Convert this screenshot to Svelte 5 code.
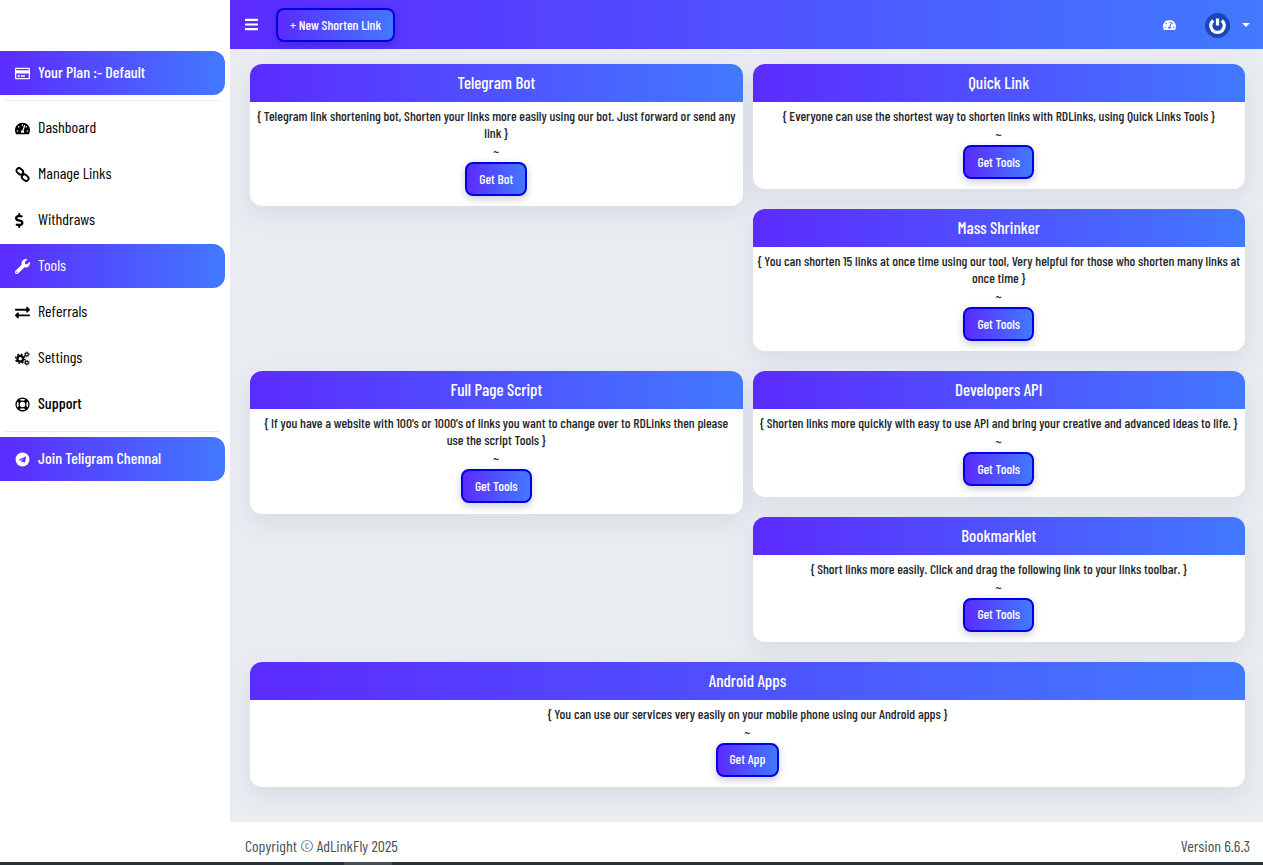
<script>
  const nav = [
    { label: 'Dashboard', icon: 'gauge' },
    { label: 'Manage Links', icon: 'link' },
    { label: 'Withdraws', icon: 'dollar' },
    { label: 'Tools', icon: 'wrench', active: true },
    { label: 'Referrals', icon: 'exchange' },
    { label: 'Settings', icon: 'cogs' },
    { label: 'Support', icon: 'ring', strong: true }
  ];
  const paths = {
    gauge: ['0 0 576 512', 'M288 32C128.94 32 0 160.94 0 320c0 52.8 14.25 102.26 39.06 144.8 5.61 9.62 16.3 15.2 27.44 15.2h443c11.14 0 21.83-5.58 27.44-15.2C561.75 422.26 576 372.8 576 320c0-159.06-128.94-288-288-288zm0 64c14.71 0 26.58 10.13 30.32 23.65-1.11 2.26-2.64 4.23-3.45 6.67l-9.22 27.67c-5.13 3.49-10.97 6.01-17.64 6.01-17.67 0-32-14.33-32-32S270.33 96 288 96zM96 384c-17.67 0-32-14.33-32-32s14.33-32 32-32 32 14.33 32 32-14.33 32-32 32zm48-160c-17.67 0-32-14.33-32-32s14.33-32 32-32 32 14.33 32 32-14.33 32-32 32zm246.77-72.41l-61.33 184C343.13 347.33 352 364.54 352 384c0 11.72-3.38 22.55-8.88 32H232.88c-5.5-9.45-8.88-20.28-8.88-32 0-33.94 26.5-61.43 59.9-63.59l61.34-184.01c4.17-12.56 17.73-19.45 30.36-15.17 12.57 4.19 19.35 17.79 15.17 30.36zm14.66 57.2l15.52-46.55c3.47-1.29 7.13-2.23 11.05-2.23 17.67 0 32 14.33 32 32s-14.33 32-32 32c-11.38-.01-20.89-6.28-26.57-15.22zM480 384c-17.67 0-32-14.33-32-32s14.33-32 32-32 32 14.33 32 32-14.33 32-32 32z'],
    dollar: ['0 0 288 512', 'M209.2 233.4l-108-31.6C88.7 198.2 80 186.5 80 173.5c0-16.3 13.2-29.5 29.5-29.5h66.3c12.2 0 24.2 3.7 34.2 10.5 6.1 4.1 14.3 3.1 19.5-2l34.8-34c7.1-6.9 6.1-18.4-1.8-24.5C238 74.8 207.4 64.1 176 64V16c0-8.8-7.2-16-16-16h-32c-8.8 0-16 7.2-16 16v48h-2.5C45.8 64-5.4 118.7.5 183.6c4.2 46.1 39.4 83.6 83.8 96.6l102.5 30c12.5 3.7 21.2 15.3 21.2 28.3 0 16.3-13.2 29.5-29.5 29.5h-66.3C100 368 88 364.3 78 357.5c-6.1-4.1-14.3-3.1-19.5 2l-34.8 34c-7.1 6.9-6.1 18.4 1.8 24.5 24.5 19.2 55.1 29.9 86.5 30v48c0 8.8 7.2 16 16 16h32c8.8 0 16-7.2 16-16v-48.2c46.6-.9 90.3-28.6 105.7-72.7 21.5-61.6-14.6-124.8-72.5-141.7z'],
    wrench: ['0 0 512 512', 'M507.73 109.1c-2.24-9.03-13.54-12.09-20.12-5.51l-74.36 74.36-67.88-11.31-11.31-67.88 74.36-74.36c6.62-6.62 3.43-17.9-5.66-20.16-47.38-11.74-99.55.91-136.58 37.93-39.64 39.64-50.55 97.1-34.05 147.2L18.74 402.76c-24.99 24.99-24.99 65.51 0 90.5 24.99 24.99 65.51 24.99 90.5 0l213.21-213.21c50.12 16.71 107.47 5.68 147.37-34.22 37.07-37.07 49.7-89.32 37.91-136.73zM64 472c-13.25 0-24-10.75-24-24 0-13.26 10.75-24 24-24s24 10.74 24 24c0 13.25-10.75 24-24 24z'],
    exchange: ['0 0 512 512', 'M0 168v-16c0-13.255 10.745-24 24-24h360V80c0-21.367 25.899-32.042 40.971-16.971l80 80c9.372 9.373 9.372 24.569 0 33.941l-80 80C409.956 271.982 384 261.456 384 240v-48H24c-13.255 0-24-10.745-24-24zm488 152H128v-48c0-21.314-25.862-32.08-40.971-16.971l-80 80c-9.372 9.373-9.372 24.569 0 33.941l80 80C102.057 463.997 128 453.437 128 432v-48h360c13.255 0 24-10.745 24-24v-16c0-13.255-10.745-24-24-24z']
  };
  const card = 'M527.9 32H48.1C21.5 32 0 53.5 0 80v352c0 26.5 21.5 48 48.1 48h479.8c26.6 0 48.1-21.5 48.1-48V80c0-26.5-21.5-48-48.1-48zM54.1 80h467.8c3.3 0 6 2.7 6 6v42H48.1V86c0-3.3 2.7-6 6-6zm467.8 352H54.1c-3.3 0-6-2.7-6-6V256h479.8v170c0 3.3-2.7 6-6 6zM192 332v40c0 6.6-5.4 12-12 12h-72c-6.6 0-12-5.4-12-12v-40c0-6.6 5.4-12 12-12h72c6.6 0 12 5.4 12 12zm192 0v40c0 6.6-5.4 12-12 12H236c-6.6 0-12-5.4-12-12v-40c0-6.6 5.4-12 12-12h136c6.6 0 12 5.4 12 12z';
  const bars = 'M16 132h416c8.837 0 16-7.163 16-16V76c0-8.837-7.163-16-16-16H16C7.163 60 0 67.163 0 76v40c0 8.837 7.163 16 16 16zm0 160h416c8.837 0 16-7.163 16-16v-40c0-8.837-7.163-16-16-16H16c-8.837 0-16 7.163-16 16v40c0 8.837 7.163 16 16 16zm0 160h416c8.837 0 16-7.163 16-16v-40c0-8.837-7.163-16-16-16H16c-8.837 0-16 7.163-16 16v40c0 8.837 7.163 16 16 16z';
  const rows = [
    {
      left: [{ t: 'Telegram Bot', d: '{ Telegram link shortening bot, Shorten your links more easily using our bot. Just forward or send any link }', b: 'Get Bot' }],
      right: [
        { t: 'Quick Link', d: '{ Everyone can use the shortest way to shorten links with RDLinks, using Quick Links Tools }', b: 'Get Tools' },
        { t: 'Mass Shrinker', d: '{ You can shorten 15 links at once time using our tool, Very helpful for those who shorten many links at once time }', b: 'Get Tools' }
      ]
    },
    {
      left: [{ t: 'Full Page Script', d: "{ If you have a website with 100's or 1000's of links you want to change over to RDLinks then please use the script Tools }", b: 'Get Tools' }],
      right: [
        { t: 'Developers API', d: '{ Shorten links more quickly with easy to use API and bring your creative and advanced ideas to life. }', b: 'Get Tools' },
        { t: 'Bookmarklet', d: '{ Short links more easily. Click and drag the following link to your links toolbar. }', b: 'Get Tools' }
      ]
    }
  ];
  const android = { t: 'Android Apps', d: '{ You can use our services very easily on your mobile phone using our Android apps }', b: 'Get App' };
</script>

{#snippet tool(c)}
  <section class="card">
    <h2>{c.t}</h2>
    <div class="body">
      <p>{c.d}</p>
      <p>~</p>
      <button class="grad btn">{c.b}</button>
    </div>
  </section>
{/snippet}

{#snippet navIcon(name)}
  {#if paths[name]}
    <svg class="ico" viewBox={paths[name][0]} preserveAspectRatio="xMinYMid meet"><path d={paths[name][1]} fill="currentColor" /></svg>
  {:else if name === 'link'}
    <svg class="ico" viewBox="0 0 15 15" fill="none" stroke="currentColor" stroke-width="1.9">
      <rect x="1.2" y="1.8" width="7.2" height="5" rx="2.5" transform="rotate(40 4.8 4.3)" />
      <rect x="6.6" y="8.2" width="7.2" height="5" rx="2.5" transform="rotate(40 10.2 10.7)" />
    </svg>
  {:else if name === 'cogs'}
    <svg class="ico" viewBox="0 0 16 16" fill="none" stroke="currentColor">
      <circle cx="5.6" cy="8.2" r="3" stroke-width="2.4" />
      <circle cx="5.6" cy="8.2" r="4.9" stroke-width="1.6" stroke-dasharray="1.9 1.95" />
      <circle cx="12.6" cy="3.6" r="1.6" stroke-width="1.3" />
      <circle cx="12.6" cy="12.4" r="1.6" stroke-width="1.3" />
      <circle cx="12.6" cy="3.6" r="2.6" stroke-width="0.9" stroke-dasharray="1 1.04" />
      <circle cx="12.6" cy="12.4" r="2.6" stroke-width="0.9" stroke-dasharray="1 1.04" />
    </svg>
  {:else if name === 'ring'}
    <svg class="ico" viewBox="0 0 16 16" fill="none" stroke="currentColor">
      <circle cx="8" cy="8" r="6.9" stroke-width="1.4" />
      <circle cx="8" cy="8" r="3.6" stroke-width="1.4" />
      <path d="M3.1 3.1 5.5 5.5M12.9 3.1 10.5 5.5M3.1 12.9 5.5 10.5M12.9 12.9 10.5 10.5" stroke-width="3.2" />
    </svg>
  {/if}
{/snippet}

<div class="page">
  <div class="frame">
    <aside>
      <a class="item grad first" href="#plan">
        <svg class="ico" viewBox="0 0 576 512"><path d={card} fill="currentColor" /></svg>
        <span class="strong">Your Plan :- Default</span>
      </a>
      <hr />
      <nav>
        {#each nav as n}
          <a class="item" class:grad={n.active} href="#x">
            {@render navIcon(n.icon)}
            <span class:strong={n.strong}>{n.label}</span>
          </a>
        {/each}
      </nav>
      <hr class="second" />
      <a class="item grad join" href="#join">
        <svg class="ico" viewBox="0 0 16 16">
          <circle cx="8" cy="8" r="7.4" fill="currentColor" />
          <path d="M3.8 8.3 11.8 4.4 10.6 11.4 8.2 10 6.9 11.4 6.7 9.3 10 6.2 5.8 9Z" fill="#5a36ff" />
        </svg>
        <span class="strong">Join Teligram Chennal</span>
      </a>
    </aside>
    <div class="main">
      <header class="grad-nav">
        <svg class="bars" viewBox="0 0 448 512"><path d={bars} fill="#fff" /></svg>
        <button class="grad btn top">+ New Shorten Link</button>
        <div class="spacer"></div>
        <svg class="dash" viewBox={paths.gauge[0]}><path d={paths.gauge[1]} fill="#fff" /></svg>
        <span class="avatar">
          <svg viewBox="0 0 25 25" fill="none" stroke="#fff" stroke-width="3.2"><path d="M8.2 7.4a6.8 6.8 0 1 0 8.6 0M12.5 5.5v7" /></svg>
        </span>
        <span class="caret"></span>
      </header>
      <main>
        {#each rows as r}
          <div class="row">
            <div class="col">{#each r.left as c}{@render tool(c)}{/each}</div>
            <div class="col">{#each r.right as c}{@render tool(c)}{/each}</div>
          </div>
        {/each}
        {@render tool(android)}
      </main>
      <footer>
        <span>Copyright © AdLinkFly 2025</span>
        <span>Version 6.6.3</span>
      </footer>
    </div>
  </div>
  <div class="strip"><i></i></div>
</div>

<style>
  :global(body) {
    margin: 0;
    background: #fff;
  }
  .page {
    height: 865px;
    display: flex;
    flex-direction: column;
    overflow: hidden;
    font-family: "Barlow Condensed", "Barlow Semi Condensed", "Roboto Condensed", sans-serif;
    font-size: 16px;
    font-weight: 400;
    color: #212529;
  }
  .frame {
    flex: 1;
    display: flex;
    min-height: 0;
  }
  aside {
    width: 230px;
    flex: none;
    padding-top: 51px;
    box-sizing: border-box;
    background: #fff;
  }
  .item {
    width: 225px;
    height: 46px;
    display: flex;
    align-items: center;
    gap: 8px;
    padding-left: 15px;
    box-sizing: border-box;
    color: #000;
    text-decoration: none;
    border-radius: 0 12px 12px 0;
  }
  .item span {
    margin-bottom: 3px;
  }
  .grad {
    height: 44px;
    margin: 1px 0;
    background: linear-gradient(90deg, #5c2bff, #4279ff);
    color: #fff;
  }
  .first, .join {
    margin: 0;
  }
  .ico {
    width: 15px;
    height: 15px;
    flex: none;
  }
  .strong {
    font-weight: 500;
  }
  hr {
    margin: 5px;
    border: 0;
    border-top: 1px solid #e9ecef;
    width: 215px;
  }
  nav {
    margin-top: -1px;
  }
  hr.second {
    margin-top: 4px;
  }
  .main {
    flex: 1;
    min-width: 0;
    display: flex;
    flex-direction: column;
    background: #e9edf2;
  }
  .grad-nav {
    height: 49px;
    flex: none;
    display: flex;
    align-items: center;
    padding: 0 13px 0 15px;
    box-sizing: border-box;
    background: linear-gradient(90deg, #5c2bff, #4279ff);
  }
  .bars {
    width: 13px;
    height: 15px;
  }
  .btn {
    height: 34px;
    margin: 0;
    padding: 0 12px 2px;
    border: 2px solid #0000e6;
    border-radius: 8px;
    font: inherit;
    font-size: 13.6px;
    font-weight: 500;
    box-shadow: 0 3px 8px rgba(0, 0, 40, 0.2);
  }
  .top {
    margin: 1px 0 0 18px;
  }
  .spacer {
    flex: 1;
  }
  .dash {
    width: 13px;
    height: 12px;
    margin-right: 29px;
  }
  .avatar {
    width: 25px;
    height: 25px;
    margin-top: 1px;
    border-radius: 50%;
    background: #1a47b8;
    display: flex;
  }
  .avatar svg {
    width: 25px;
    height: 25px;
  }
  .caret {
    margin: 0 0 0 12px;
    border-top: 4px solid #fff;
    border-left: 4px solid transparent;
    border-right: 4px solid transparent;
  }
  main {
    flex: 1;
    padding: 15px 18px 0 20px;
    display: flex;
    flex-direction: column;
    gap: 20px;
    min-height: 0;
  }
  .row {
    display: flex;
    gap: 10px;
  }
  .col {
    flex: 1 1 0;
    min-width: 0;
    display: flex;
    flex-direction: column;
    gap: 20px;
  }
  .card {
    background: #fff;
    border-radius: 12px;
    overflow: hidden;
    box-shadow: 0 8px 24px rgba(60, 70, 100, 0.1);
  }
  h2 {
    margin: 0;
    height: 38px;
    line-height: 36px;
    text-align: center;
    color: #fff;
    font-size: 17px;
    font-weight: 500;
    background: linear-gradient(90deg, #5c2bff, #4279ff);
  }
  .body {
    padding: 5px 5px 10.2px;
    text-align: center;
  }
  p {
    margin: 0;
    font-size: 13.6px;
    font-weight: 500;
    line-height: 17px;
  }
  p + p {
    margin-top: 1px;
  }
  .body .btn {
    margin-top: 3px;
    display: inline-block;
    vertical-align: top;
  }
  footer {
    height: 40px;
    flex: none;
    background: #fff;
    display: flex;
    justify-content: space-between;
    align-items: center;
    padding: 7px 13px 0 15px;
    box-sizing: border-box;
    color: #495057;
  }
  .strip {
    height: 3px;
    flex: none;
    background: #263238;
    position: relative;
  }
  .strip i {
    position: absolute;
    left: 344px;
    width: 48px;
    top: 0;
    bottom: 0;
    background: #454f54;
  }
</style>
